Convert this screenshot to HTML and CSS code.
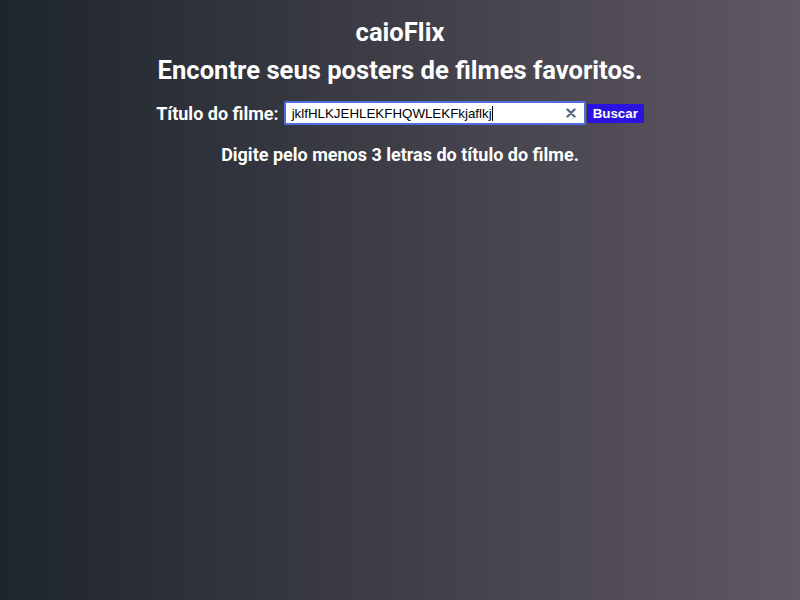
FILE: index.html
```html
<!DOCTYPE html>
<html lang="pt-BR">
<head>
<meta charset="utf-8">
<title>caioFlix</title>
<link rel="stylesheet" href="styles.css">
</head>
<body>
<main class="app">
  <h1 class="brand">caioFlix</h1>
  <h2 class="tagline">Encontre seus posters de filmes favoritos.</h2>
  <form class="search">
    <label class="search-label" for="q">Título do filme:</label>
    <div class="field">
      <span class="field-text">jklfHLKJEHLEKFHQWLEKFkjaflkj<span class="caret"></span></span>
      <svg class="clear" width="10" height="10" viewBox="0 0 10 10"><path d="M1.5 1.5L8.5 8.5M8.5 1.5L1.5 8.5" stroke="#5a6a80" stroke-width="2.4" stroke-linecap="round"/></svg>
    </div>
    <button type="button" class="search-btn">Buscar</button>
  </form>
  <p class="hint">Digite pelo menos 3 letras do título do filme.</p>
</main>
</body>
</html>
```
FILE: styles.css
```css
html, body {
  margin: 0;
  height: 100%;
}
body {
  background: linear-gradient(to right, #1e252c 0%, #605864 100%);
  font-family: Roboto, "Liberation Sans", sans-serif;
  color: #ffffff;
}
.app {
  display: flex;
  flex-direction: column;
  align-items: center;
  padding-top: 16px;
}
.brand {
  margin: 0;
  font-size: 25.6px;
  font-weight: 700;
  line-height: 32px;
}
.tagline {
  margin: 6px 0 0;
  font-size: 25.6px;
  font-weight: 700;
  line-height: 32px;
}
.search {
  display: flex;
  align-items: center;
  margin-top: 15px;
}
.search-label {
  font-size: 18px;
  font-weight: 700;
  margin-right: 5px;
}
.field {
  display: flex;
  align-items: center;
  box-sizing: border-box;
  width: 302px;
  height: 24px;
  border: 2px solid #4f6fe0;
  border-radius: 2px;
  background: #ffffff;
  padding: 0 8px 0 6px;
  color: #000000;
  font-family: "Liberation Sans", Arial, sans-serif;
  font-size: 13.333px;
}
.field-text {
  flex: 1;
  white-space: nowrap;
  display: flex;
  align-items: center;
}
.caret {
  display: inline-block;
  width: 1px;
  height: 15px;
  background: #000;
}
.clear {
  display: block;
}
.search-btn {
  align-self: flex-start;
  margin: 3px 0 0 1px;
  height: 19px;
  padding: 0 6px;
  border: none;
  border-radius: 2px;
  background: #2a12e0;
  color: #ffffff;
  font-family: "Liberation Sans", Arial, sans-serif;
  font-size: 13.333px;
  font-weight: 700;
}
.hint {
  margin: 19px 0 0;
  font-size: 18px;
  font-weight: 700;
}
```
